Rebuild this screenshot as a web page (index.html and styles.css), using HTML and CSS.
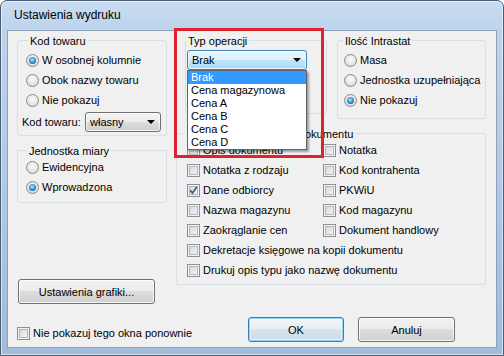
FILE: index.html
```html
<!DOCTYPE html>
<html lang="pl">
<head>
<meta charset="utf-8">
<title>Ustawienia wydruku</title>
<link rel="stylesheet" href="styles.css">
</head>
<body>
<div class="window">
  <div class="titlebar">Ustawienia wydruku</div>
  <div class="client">
    <div class="top">
      <div class="col-left">
        <div class="group g-kod">
          <div class="legend">Kod towaru</div>
          <div class="opts">
            <div class="opt"><span class="radio on"></span>W osobnej kolumnie</div>
            <div class="opt"><span class="radio"></span>Obok nazwy towaru</div>
            <div class="opt"><span class="radio"></span>Nie pokazuj</div>
          </div>
          <div class="combo-row">
            <span class="combo-label">Kod towaru:</span>
            <div class="combo grey"><span>własny</span><span class="arrow"></span></div>
          </div>
        </div>
        <div class="group g-jm">
          <div class="legend">Jednostka miary</div>
          <div class="opts">
            <div class="opt"><span class="radio"></span>Ewidencyjna</div>
            <div class="opt"><span class="radio on"></span>Wprowadzona</div>
          </div>
        </div>
        <div class="btn btn-graf">Ustawienia grafiki...</div>
      </div>
      <div class="col-right">
        <div class="row1">
          <div class="group g-typ">
            <div class="legend">Typ operacji</div>
            <div class="combo-wrap">
              <div class="combo open"><span>Brak</span><span class="arrow"></span></div>
              <ul class="dropdown">
                <li class="sel">Brak</li>
                <li>Cena magazynowa</li>
                <li>Cena A</li>
                <li>Cena B</li>
                <li>Cena C</li>
                <li>Cena D</li>
              </ul>
            </div>
          </div>
          <div class="group g-intra">
            <div class="legend">Ilość Intrastat</div>
            <div class="opts">
              <div class="opt"><span class="radio"></span>Masa</div>
              <div class="opt"><span class="radio"></span>Jednostka uzupełniająca</div>
              <div class="opt"><span class="radio on"></span>Nie pokazuj</div>
            </div>
          </div>
        </div>
        <div class="group g-doc">
          <div class="legend">Dodatkowe informacje dokumentu</div>
          <div class="checks">
            <div class="opt"><span class="cb"></span>Opis dokumentu</div>
            <div class="opt"><span class="cb"></span>Notatka</div>
            <div class="opt"><span class="cb"></span>Notatka z rodzaju</div>
            <div class="opt"><span class="cb"></span>Kod kontrahenta</div>
            <div class="opt"><span class="cb"><svg viewBox="0 0 13 13" width="13" height="13"><path d="M3.2 6.2 L5.4 9 L9.8 3" fill="none" stroke="#3f5a8e" stroke-width="1.7"/></svg></span>Dane odbiorcy</div>
            <div class="opt"><span class="cb"></span>PKWiU</div>
            <div class="opt"><span class="cb"></span>Nazwa magazynu</div>
            <div class="opt"><span class="cb"></span>Kod magazynu</div>
            <div class="opt"><span class="cb"></span>Zaokrąglanie cen</div>
            <div class="opt"><span class="cb"></span>Dokument handlowy</div>
            <div class="opt wide"><span class="cb"></span>Dekretacje księgowe na kopii dokumentu</div>
            <div class="opt wide"><span class="cb"></span>Drukuj opis typu jako nazwę dokumentu</div>
          </div>
        </div>
      </div>
    </div>
    <div class="bottom">
      <div class="opt chk-row"><span class="cb"></span>Nie pokazuj tego okna ponownie</div>
      <div class="btn btn-ok">OK</div>
      <div class="btn btn-cancel">Anuluj</div>
    </div>
  </div>
  <div class="redbox"></div>
</div>
</body>
</html>
```
FILE: styles.css
```css
html, body {
  margin: 0;
  padding: 0;
  background: #ffffff;
}
body {
  font-family: "Liberation Sans", Arial, sans-serif;
  font-size: 11px;
  color: #000;
}
.window {
  position: relative;
  width: 504px;
  height: 356px;
  box-sizing: border-box;
  border: 1px solid #4a5d73;
  border-radius: 7px 7px 0 0;
  padding: 0 6px 6px;
  background: linear-gradient(180deg, #c9ddf1 0px, #bcd3ec 30px, #adc8e5 200px, #9fbcdc 356px);
  box-shadow: inset 0 0 0 1px rgba(255,255,255,0.55);
  display: flex;
  flex-direction: column;
  overflow: hidden;
}
.titlebar {
  height: 29px;
  line-height: 29px;
  padding-left: 7px;
  font-size: 12px;
  flex: none;
}
.client {
  flex: none;
  height: 318px;
  box-sizing: border-box;
  border: 1px solid #8da2b9;
  background: #f0f0f0;
  padding: 9px 9px 0 9px;
  display: flex;
  flex-direction: column;
}
.top {
  display: flex;
  gap: 9px;
  height: 264px;
  flex: none;
}
.col-left {
  width: 150px;
  display: flex;
  flex-direction: column;
}
.col-right {
  width: 310px;
  display: flex;
  flex-direction: column;
}
.row1 {
  display: flex;
  align-items: flex-start;
}
.group {
  box-sizing: border-box;
  border: 1px solid #d5dfe5;
  border-radius: 3px;
  flex: none;
}
.legend {
  width: fit-content;
  background: #f0f0f0;
  line-height: 14px;
  margin-top: -7px;
  padding: 0 2px;
  white-space: nowrap;
}
.g-kod { height: 96px; }
.g-kod .legend { margin-left: 10px; }
.g-jm { height: 53px; margin-top: 14px; }
.g-jm .legend { margin-left: 9px; }
.g-typ { width: 142px; height: 74px; margin-left: 9px; }
.g-typ .legend { margin-left: 0; }
.g-intra { width: 149px; height: 79px; margin-left: 10px; }
.g-intra .legend { margin-left: 5px; }
.g-doc { height: 152px; margin-top: 14px; }
.g-doc .legend { margin-left: 8px; }

.opts { margin-top: 2px; }
.g-kod .opts, .g-jm .opts { padding-left: 8px; }
.g-jm .opts { margin-top: -1px; }
.g-intra .opts { padding-left: 6px; }

.opt {
  display: flex;
  align-items: center;
  height: 20px;
  white-space: nowrap;
}
.radio {
  flex: none;
  box-sizing: border-box;
  width: 13px;
  height: 13px;
  border-radius: 50%;
  border: 1px solid #8a8a8a;
  background: radial-gradient(circle at 50% 40%, #fbfbfb 0%, #e6e6e6 55%, #cdcdcd 100%);
  display: flex;
  align-items: center;
  justify-content: center;
  margin-right: 3px;
}
.radio.on::after {
  content: "";
  width: 7px;
  height: 7px;
  border-radius: 50%;
  background: radial-gradient(circle at 45% 40%, #b5ecff 0%, #3c9ad9 45%, #165d9c 80%, #0e416f 100%);
}
.cb {
  flex: none;
  box-sizing: border-box;
  width: 13px;
  height: 13px;
  border: 1px solid #8e8f8f;
  background: linear-gradient(135deg, #cbcfd5 0%, #e7e9ec 55%, #f7f7f7 100%);
  box-shadow: inset 0 0 0 1px #f4f4f4, inset 0 0 0 2px #b3b8be;
  margin-right: 3px;
  position: relative;
}
.cb svg {
  position: absolute;
  left: -1px;
  top: -1px;
}
.checks {
  display: grid;
  grid-template-columns: 136px auto;
  padding-left: 10px;
  margin-top: -1px;
}
.checks .wide { grid-column: span 2; }

.combo-row {
  display: flex;
  align-items: center;
  height: 21px;
  margin-top: 1px;
  padding-left: 4px;
}
.combo-label { width: 63px; }
.combo {
  box-sizing: border-box;
  height: 20px;
  border: 1px solid #707070;
  border-radius: 3px;
  display: flex;
  align-items: center;
  justify-content: space-between;
  padding: 0 5px 0 4px;
  background: linear-gradient(180deg, #f3f3f3 0%, #ebebeb 50%, #dddddd 50%, #cfcfcf 100%);
  box-shadow: inset 0 0 0 1px rgba(255,255,255,0.7);
}
.combo.grey { width: 76px; }
.combo-wrap {
  position: relative;
  width: 120px;
  margin: 2px 0 0 1px;
}
.combo.open {
  border-color: #3c7fb1;
  background: linear-gradient(180deg, #eaf6fd 0%, #d9f0fc 50%, #bee6fd 50%, #a7d9f5 100%);
  padding-left: 4px;
}
.arrow {
  width: 0;
  height: 0;
  border-left: 4px solid transparent;
  border-right: 4px solid transparent;
  border-top: 4px solid #000;
}
.dropdown {
  position: absolute;
  top: 100%;
  left: 0;
  width: 120px;
  box-sizing: border-box;
  margin: 0;
  padding: 0;
  list-style: none;
  background: #fff;
  border: 1px solid #646464;
  box-shadow: 2px 2px 2px rgba(0,0,0,0.35);
  z-index: 5;
}
.dropdown li {
  height: 13px;
  line-height: 13px;
  padding-left: 3px;
}
.dropdown li.sel {
  background: #3399ff;
  color: #fff;
}

.btn {
  box-sizing: border-box;
  height: 25px;
  border: 1px solid #707070;
  border-radius: 3px;
  background: linear-gradient(180deg, #f2f2f2 0%, #ebebeb 50%, #dddddd 50%, #cfcfcf 100%);
  box-shadow: inset 0 0 0 1px rgba(255,255,255,0.8);
  display: flex;
  align-items: center;
  justify-content: center;
  flex: none;
}
.btn-graf {
  width: 137px;
  margin: 76px 0 0 1px;
}
.bottom {
  display: flex;
  align-items: flex-start;
  margin-top: 13px;
}
.chk-row { margin-top: 6px; }
.btn-ok {
  margin-left: auto;
  width: 96px;
  border-color: #3c7fb1;
  background: linear-gradient(180deg, #f0f6fa 0%, #e6eff5 50%, #d6e3ec 50%, #cbdbe7 100%);
  box-shadow: inset 0 0 0 1px #8fd3f5, inset 0 0 0 2px rgba(255,255,255,0.5);
}
.btn-cancel {
  width: 97px;
  margin-left: 14px;
  margin-right: 32px;
}
.redbox {
  position: absolute;
  left: 173px;
  top: 27px;
  width: 150px;
  height: 130px;
  box-sizing: border-box;
  border: 3px solid #dc2330;
  z-index: 10;
  pointer-events: none;
}
```
